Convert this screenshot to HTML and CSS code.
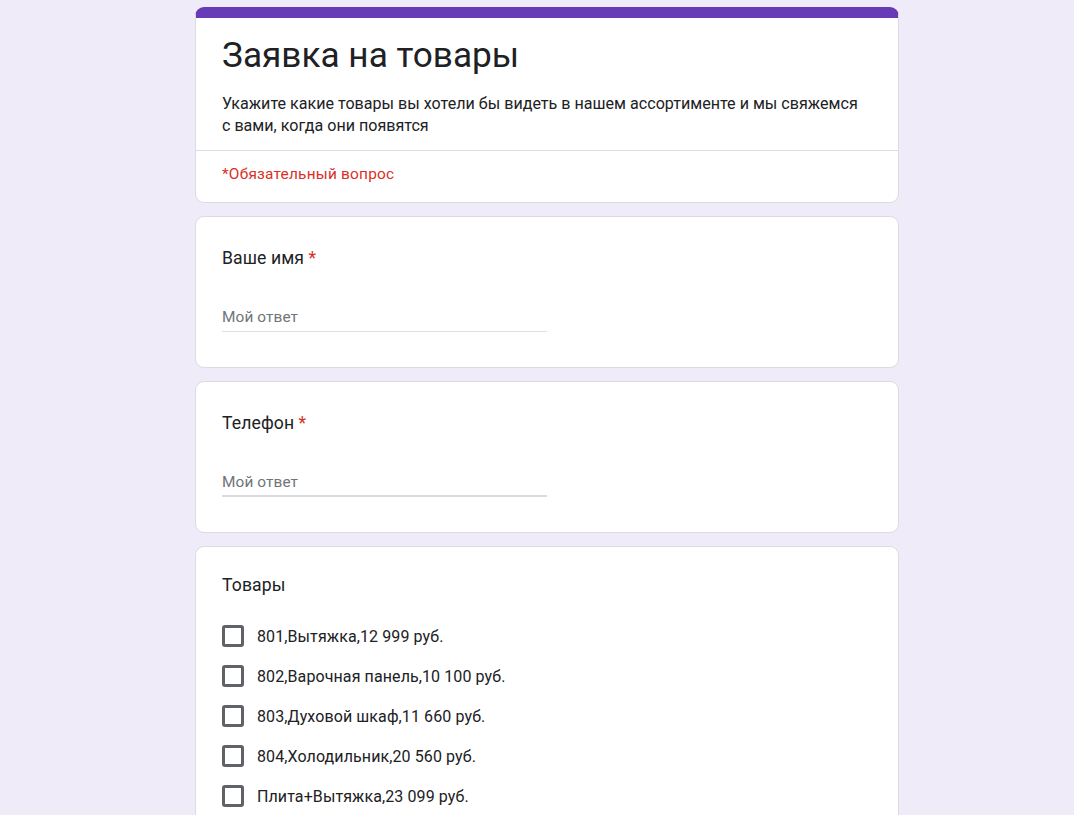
FILE: index.html
```html
<!DOCTYPE html>
<html lang="ru">
<head>
    <meta charset="UTF-8">
    <meta name="viewport" content="width=device-width, initial-scale=1.0">
    <title>Заявка на товары</title>
    <link rel="stylesheet" href="styles.css">
</head>
<body>
    <div class="form">
        <!-- Header -->
        <div class="card header-card">
            <div class="header-main">
                <h1 class="form-title">Заявка на товары</h1>
                <div class="form-desc">Укажите какие товары вы хотели бы видеть в нашем ассортименте и мы свяжемся с вами, когда они появятся</div>
            </div>
            <div class="required-note">*Обязательный вопрос</div>
        </div>

        <!-- Name -->
        <div class="card question">
            <div class="q-title">Ваше имя <span class="star">*</span></div>
            <div class="text-input">Мой ответ</div>
        </div>

        <!-- Phone -->
        <div class="card question">
            <div class="q-title">Телефон <span class="star">*</span></div>
            <div class="text-input hovered">Мой ответ</div>
        </div>

        <!-- Goods -->
        <div class="card question goods">
            <div class="q-title">Товары</div>
            <div class="options">
                <label class="option"><span class="box"></span>801,Вытяжка,12 999 руб.</label>
                <label class="option"><span class="box"></span>802,Варочная панель,10 100 руб.</label>
                <label class="option"><span class="box"></span>803,Духовой шкаф,11 660 руб.</label>
                <label class="option"><span class="box"></span>804,Холодильник,20 560 руб.</label>
                <label class="option"><span class="box"></span>Плита+Вытяжка,23 099 руб.</label>
            </div>
        </div>
    </div>
</body>
</html>
```

FILE: styles.css
```css
body {
    margin: 0;
    background-color: #f0ebf8;
    font-family: Roboto, "Noto Sans", Arial, sans-serif;
    color: #202124;
    overflow: hidden;
}

.form {
    width: 704px;
    margin: 7px 0 0 195px;
    display: flex;
    flex-direction: column;
    gap: 13px;
}

.card {
    background-color: #fff;
    border: 1px solid #dadce0;
    border-radius: 9px;
}

/* Header card */
.header-card {
    border-top: 11px solid #673ab7;
}

.header-main {
    padding: 13px 26px 13px;
    border-bottom: 1px solid #dadce0;
}

.form-title {
    margin: 0;
    font-size: 35.2px;
    font-weight: 400;
    line-height: 48px;
}

.form-desc {
    margin-top: 14px;
    font-size: 16.1px;
    line-height: 22px;
    padding-right: 14px;
}

.required-note {
    padding: 12px 26px 17px;
    font-size: 15.4px;
    line-height: 22px;
    color: #d93025;
    letter-spacing: 0.22px;
}

/* Questions */
.question {
    padding: 28px 26px 35px;
}

.q-title {
    font-size: 17.6px;
    line-height: 26px;
    letter-spacing: 0.1px;
}

.star {
    color: #d93025;
}

.text-input {
    width: 325px;
    margin-top: 35px;
    padding-bottom: 3px;
    border-bottom: 1px solid #e0e0e0;
    font-size: 15.4px;
    line-height: 22px;
    color: #70757a;
    letter-spacing: 0.1px;
}

.text-input.hovered {
    border-bottom: 2px solid #dadce0;
    padding-bottom: 2px;
}

.goods {
    padding-top: 25px;
}

.options {
    margin-top: 18px;
    display: flex;
    flex-direction: column;
}

.option {
    display: flex;
    align-items: center;
    height: 40px;
    font-size: 16px;
    letter-spacing: 0.1px;
}

.box {
    box-sizing: border-box;
    width: 22px;
    height: 22px;
    border: 3px solid #5f6368;
    border-radius: 3px;
    margin-right: 13px;
    flex-shrink: 0;
}
```
